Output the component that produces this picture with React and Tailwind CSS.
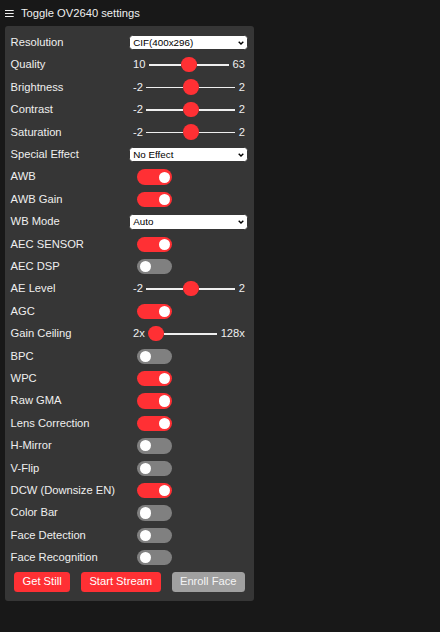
const rows = [
  { label: 'Resolution', type: 'select', value: 'CIF(400x296)' },
  { label: 'Quality', type: 'range', min: '10', max: '63', pos: 0.5 },
  { label: 'Brightness', type: 'range', min: '-2', max: '2', pos: 0.5 },
  { label: 'Contrast', type: 'range', min: '-2', max: '2', pos: 0.5 },
  { label: 'Saturation', type: 'range', min: '-2', max: '2', pos: 0.5 },
  { label: 'Special Effect', type: 'select', value: 'No Effect' },
  { label: 'AWB', type: 'switch', on: true },
  { label: 'AWB Gain', type: 'switch', on: true },
  { label: 'WB Mode', type: 'select', value: 'Auto' },
  { label: 'AEC SENSOR', type: 'switch', on: true },
  { label: 'AEC DSP', type: 'switch', on: false },
  { label: 'AE Level', type: 'range', min: '-2', max: '2', pos: 0.5 },
  { label: 'AGC', type: 'switch', on: true },
  { label: 'Gain Ceiling', type: 'range', min: '2x', max: '128x', pos: 0 },
  { label: 'BPC', type: 'switch', on: false },
  { label: 'WPC', type: 'switch', on: true },
  { label: 'Raw GMA', type: 'switch', on: true },
  { label: 'Lens Correction', type: 'switch', on: true },
  { label: 'H-Mirror', type: 'switch', on: false },
  { label: 'V-Flip', type: 'switch', on: false },
  { label: 'DCW (Downsize EN)', type: 'switch', on: true },
  { label: 'Color Bar', type: 'switch', on: false },
  { label: 'Face Detection', type: 'switch', on: false },
  { label: 'Face Recognition', type: 'switch', on: false },
];

function Select({ value }) {
  return (
    <div className="flex flex-1 items-center justify-between h-[15.4px] rounded-[3.5px] bg-white border border-[#363636] pl-[2.8px] pr-[3.6px] text-[9.8px] leading-[13px] text-black">
      <span>{value}</span>
      <svg width="6" height="4" viewBox="0 0 6 4">
        <path d="M0.7 0.7 L3 3 L5.3 0.7" stroke="#000" strokeWidth="1.4" fill="none" />
      </svg>
    </div>
  );
}

function Range({ min, max, pos }) {
  return (
    <div className="flex flex-1 items-center">
      <span className="px-[3.5px]">{min}</span>
      <div className="flex flex-1 items-center h-[15.4px] min-w-0">
        <div className="h-[1.5px] min-w-0 bg-[#efefef]" style={{ flexGrow: pos, flexBasis: 0 }} />
        <div className="w-[15.4px] h-[15.4px] shrink-0 rounded-full bg-[#ff3034] -mt-[1px]" />
        <div className="h-[1.5px] min-w-0 bg-[#efefef]" style={{ flexGrow: 1 - pos, flexBasis: 0 }} />
      </div>
      <span className="px-[3.5px]">{max}</span>
    </div>
  );
}

function Switch({ on }) {
  return (
    <div
      className={`ml-[8px] flex items-center w-[35px] h-[15.4px] rounded-full px-[2.8px] ${
        on ? 'bg-[#ff3034] justify-end' : 'bg-[#808080] justify-start'
      }`}
    >
      <div className="w-[11.2px] h-[11.2px] rounded-full bg-white" />
    </div>
  );
}

export default function App() {
  return (
    <div className="min-h-screen bg-[#181818] text-[#efefef] text-[11.2px] font-['Liberation_Sans',Arial,sans-serif]">
      <div className="flex items-center h-[26px] pt-[1px] pl-[5.3px] leading-[13px]">
        <svg width="9" height="8" viewBox="0 0 9 8" className="block">
          <rect x="0" y="0" width="8.7" height="1" fill="#efefef" />
          <rect x="0" y="3" width="8.7" height="1" fill="#efefef" />
          <rect x="0" y="6" width="8.7" height="1" fill="#efefef" />
        </svg>
        <span className="ml-[6.7px]">Toggle OV2640 settings</span>
      </div>

      <nav className="ml-[5px] w-[249px] rounded-[3px] bg-[#363636] p-[5.6px]">
        {rows.map((r) => (
          <div key={r.label} className="flex items-center h-[22.4px] leading-[15.4px]">
            <div className="w-[118.9px] shrink-0">{r.label}</div>
            {r.type === 'select' && <Select value={r.value} />}
            {r.type === 'range' && <Range min={r.min} max={r.max} pos={r.pos} />}
            {r.type === 'switch' && <Switch on={r.on} />}
          </div>
        ))}
        <div className="flex justify-between">
          <button className="m-[3.5px] px-[8.4px] leading-[19.6px] rounded-[3.5px] bg-[#ff3034] text-white">
            Get Still
          </button>
          <button className="m-[3.5px] px-[8.4px] leading-[19.6px] rounded-[3.5px] bg-[#ff3034] text-white">
            Start Stream
          </button>
          <button className="m-[3.5px] px-[8.4px] leading-[19.6px] rounded-[3.5px] bg-[#a0a0a0] text-[#f4f4f4]">
            Enroll Face
          </button>
        </div>
      </nav>
    </div>
  );
}
